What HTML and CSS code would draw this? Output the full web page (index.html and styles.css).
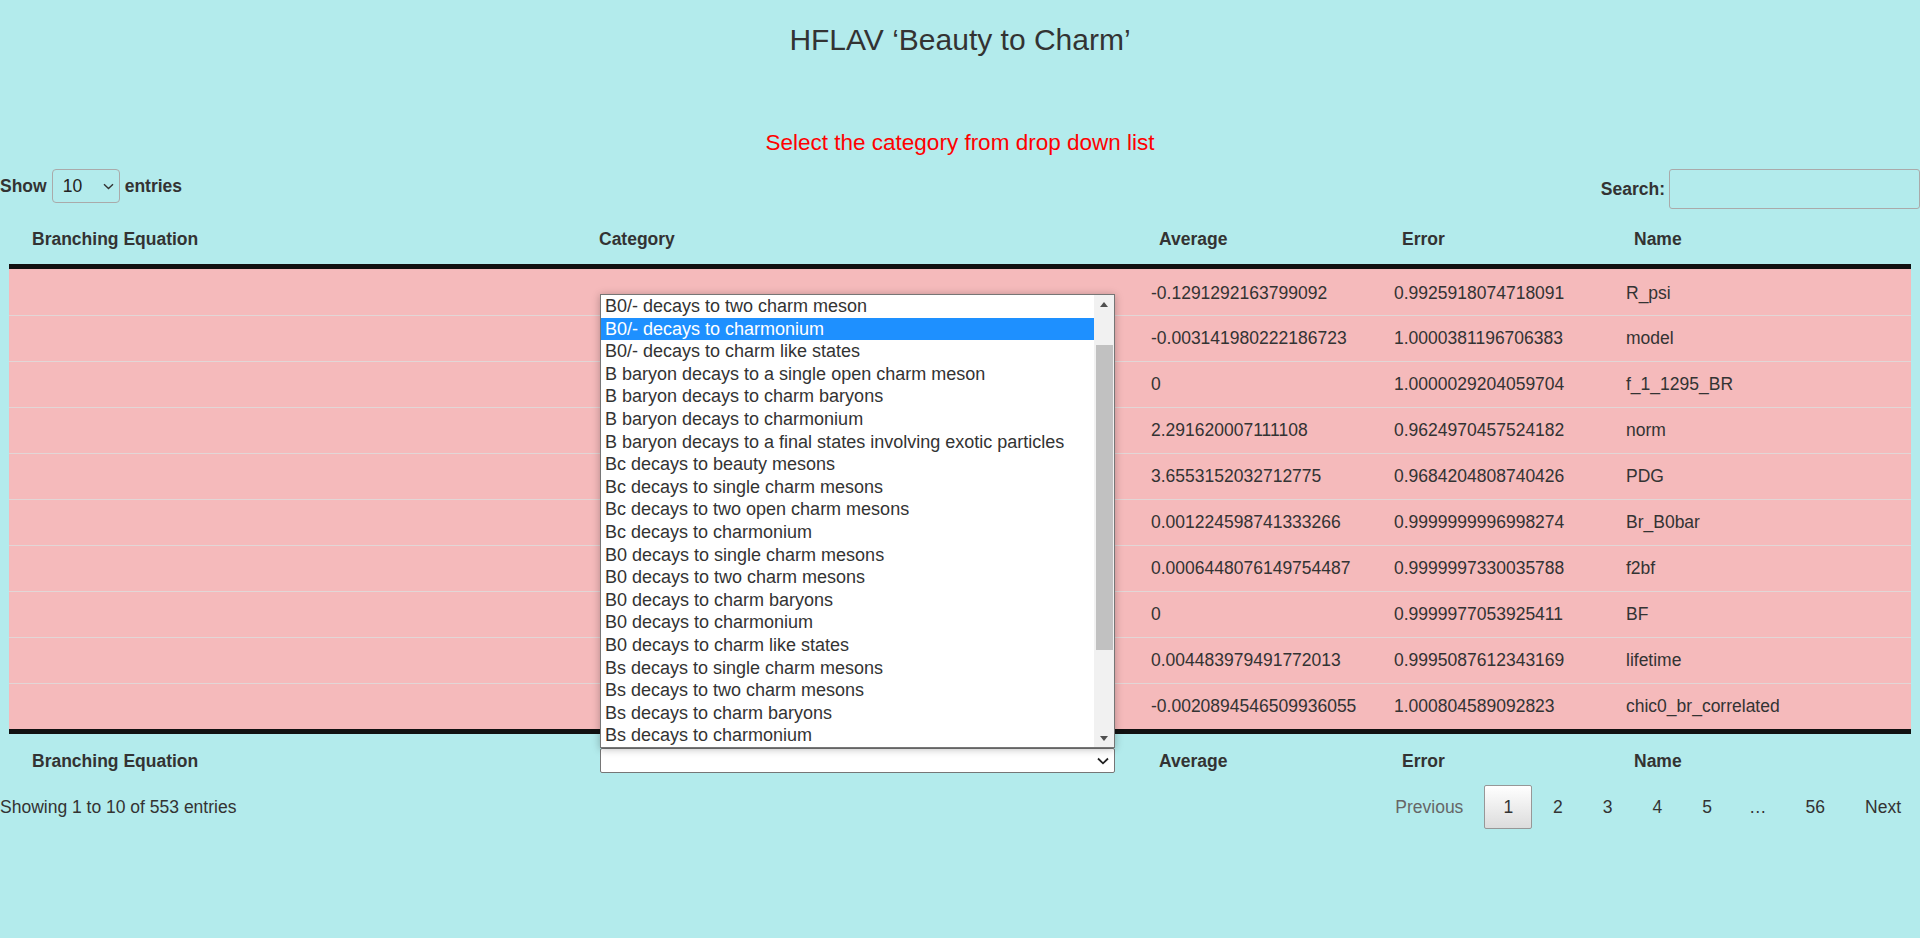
FILE: index.html
```html
<!DOCTYPE html>
<html lang="en">
<head>
<meta charset="utf-8">
<title>HFLAV Beauty to Charm</title>
<link rel="stylesheet" href="styles.css">
</head>
<body>
<h1 class="title">HFLAV ‘Beauty to Charm’</h1>
<p class="notice">Select the category from drop down list</p>

<div class="controls">
  <div class="length">
    <span>Show</span>
    <span class="select-box"><span>10</span>
      <svg class="chev-sm" width="11" height="7" viewBox="0 0 11 7"><path d="M1 1.2 L5.5 5.6 L10 1.2" fill="none" stroke="#333" stroke-width="1.4"/></svg>
    </span>
    <span>entries</span>
  </div>
  <div class="search">
    <span>Search:</span>
    <span class="search-input"></span>
  </div>
</div>

<table class="data">
  <colgroup>
    <col class="w1"><col class="w2"><col class="w3"><col class="w4"><col class="w5">
  </colgroup>
  <thead>
    <tr>
      <th class="first">Branching Equation</th>
      <th class="cat">Category</th>
      <th>Average</th>
      <th>Error</th>
      <th>Name</th>
    </tr>
  </thead>
  <tbody>
    <tr><td></td><td></td><td>-0.1291292163799092</td><td>0.9925918074718091</td><td>R_psi</td></tr>
    <tr><td></td><td></td><td>-0.003141980222186723</td><td>1.0000381196706383</td><td>model</td></tr>
    <tr><td></td><td></td><td>0</td><td>1.0000029204059704</td><td>f_1_1295_BR</td></tr>
    <tr><td></td><td></td><td>2.291620007111108</td><td>0.9624970457524182</td><td>norm</td></tr>
    <tr><td></td><td></td><td>3.6553152032712775</td><td>0.9684204808740426</td><td>PDG</td></tr>
    <tr><td></td><td></td><td>0.001224598741333266</td><td>0.9999999996998274</td><td>Br_B0bar</td></tr>
    <tr><td></td><td></td><td>0.0006448076149754487</td><td>0.9999997330035788</td><td>f2bf</td></tr>
    <tr><td></td><td></td><td>0</td><td>0.9999977053925411</td><td>BF</td></tr>
    <tr><td></td><td></td><td>0.004483979491772013</td><td>0.9995087612343169</td><td>lifetime</td></tr>
    <tr><td></td><td></td><td>-0.0020894546509936055</td><td>1.000804589092823</td><td>chic0_br_correlated</td></tr>
  </tbody>
  <tfoot>
    <tr>
      <th class="first">Branching Equation</th>
      <th class="cat-filter">
        <div class="filter">
          <div class="listbox">
            <ul class="options">
              <li>B0/- decays to two charm meson</li>
              <li class="selected">B0/- decays to charmonium</li>
              <li>B0/- decays to charm like states</li>
              <li>B baryon decays to a single open charm meson</li>
              <li>B baryon decays to charm baryons</li>
              <li>B baryon decays to charmonium</li>
              <li>B baryon decays to a final states involving exotic particles</li>
              <li>Bc decays to beauty mesons</li>
              <li>Bc decays to single charm mesons</li>
              <li>Bc decays to two open charm mesons</li>
              <li>Bc decays to charmonium</li>
              <li>B0 decays to single charm mesons</li>
              <li>B0 decays to two charm mesons</li>
              <li>B0 decays to charm baryons</li>
              <li>B0 decays to charmonium</li>
              <li>B0 decays to charm like states</li>
              <li>Bs decays to single charm mesons</li>
              <li>Bs decays to two charm mesons</li>
              <li>Bs decays to charm baryons</li>
              <li>Bs decays to charmonium</li>
            </ul>
            <div class="scrollbar">
              <div class="sb-btn"><span class="tri-up"></span></div>
              <div class="sb-track"><div class="sb-thumb"></div></div>
              <div class="sb-btn"><span class="tri-down"></span></div>
            </div>
          </div>
          <div class="fake-select">
            <svg width="12" height="8" viewBox="0 0 12 8"><path d="M1 1.5 L6 6.3 L11 1.5" fill="none" stroke="#222" stroke-width="1.8"/></svg>
          </div>
        </div>
      </th>
      <th>Average</th>
      <th>Error</th>
      <th>Name</th>
    </tr>
  </tfoot>
</table>

<div class="bottom">
  <div class="info">Showing 1 to 10 of 553 entries</div>
  <div class="paginate">
    <span class="page disabled">Previous</span>
    <span class="page current">1</span>
    <span class="page">2</span>
    <span class="page">3</span>
    <span class="page">4</span>
    <span class="page">5</span>
    <span class="ellipsis">…</span>
    <span class="page">56</span>
    <span class="page">Next</span>
  </div>
</div>
</body>
</html>
```
FILE: styles.css
```css
body {
  margin: 0;
  background: #b3ebec;
  font-family: "Liberation Sans", Arial, sans-serif;
  font-size: 17.5px;
  color: #333;
}

.title {
  margin: 0;
  padding-top: 23px;
  font-size: 30px;
  font-weight: normal;
  line-height: 34px;
  text-align: center;
  color: #333;
}

.notice {
  margin: 73px 0 0;
  font-size: 22.5px;
  line-height: 26px;
  color: #ff0000;
  text-align: center;
}

.controls {
  display: flex;
  justify-content: space-between;
  align-items: flex-start;
  margin-top: 13px;
  height: 40px;
}

.length {
  display: flex;
  align-items: center;
  gap: 5px;
  height: 34px;
  font-weight: bold;
}

.select-box {
  display: inline-flex;
  align-items: center;
  justify-content: space-between;
  box-sizing: border-box;
  width: 68px;
  height: 34px;
  padding: 0 5px 0 10px;
  border: 1px solid #aaa;
  border-radius: 4px;
  font-weight: normal;
  color: #222;
}

.search {
  display: flex;
  align-items: center;
  gap: 4px;
  height: 40px;
  font-weight: bold;
}

.search-input {
  display: block;
  box-sizing: border-box;
  width: 251px;
  height: 40px;
  border: 1px solid #aaa;
  border-radius: 3px;
}

.data {
  width: 1902px;
  margin: 10px 9px 0;
  border-collapse: separate;
  border-spacing: 0;
  table-layout: fixed;
}

.w1 { width: 572px; }
.w2 { width: 560px; }
.w3 { width: 243px; }
.w4 { width: 232px; }
.w5 { width: 295px; }

.data th {
  text-align: left;
  font-weight: bold;
  line-height: 20px;
  padding: 10px 18px 15px;
  border-bottom: 5px solid #111;
  white-space: nowrap;
}

.data th.first {
  padding-left: 23px;
}

.data th.cat {
  padding-left: 18px;
}

.data td {
  background: #f5babb;
  padding: 12px 10px;
  line-height: 21px;
  border-top: 1px solid #e2d6d6;
  white-space: nowrap;
}

.data tbody tr:first-child td {
  border-top-color: #f5babb;
  padding-top: 13px;
  padding-bottom: 11px;
}

.data tfoot th {
  padding: 14px 18px 8px;
  border-bottom: none;
  border-top: 5px solid #111;
  vertical-align: middle;
}

.data tfoot th.first {
  padding-left: 23px;
}

.data tfoot th.cat-filter {
  padding-left: 19px;
}

.filter {
  position: relative;
  width: 515px;
}

.fake-select {
  display: flex;
  align-items: center;
  justify-content: flex-end;
  box-sizing: border-box;
  height: 25px;
  padding-right: 5px;
  border: 1px solid #767676;
  border-radius: 2px;
  background: #fff;
}

.listbox {
  position: absolute;
  left: 0;
  bottom: 100%;
  width: 515px;
  height: 454px;
  box-sizing: border-box;
  display: flex;
  border: 1px solid #767676;
  background: #fff;
  box-shadow: 0 1px 8px rgba(0, 0, 0, 0.28);
  font-size: 18px;
  font-weight: normal;
  overflow: hidden;
  z-index: 5;
}

.options {
  flex: 1;
  margin: 0;
  padding: 0;
  list-style: none;
}

.options li {
  height: 22.6px;
  line-height: 22.6px;
  padding-left: 4px;
  white-space: nowrap;
  overflow: hidden;
  color: #333;
}

.options li.selected {
  background: #1e90ff;
  color: #fff;
}

.scrollbar {
  width: 20px;
  display: flex;
  flex-direction: column;
  background: #f1f1f1;
}

.sb-btn {
  height: 18px;
  display: flex;
  align-items: center;
  justify-content: center;
}

.tri-up {
  width: 0;
  height: 0;
  border-left: 4px solid transparent;
  border-right: 4px solid transparent;
  border-bottom: 5px solid #505050;
}

.tri-down {
  width: 0;
  height: 0;
  border-left: 4px solid transparent;
  border-right: 4px solid transparent;
  border-top: 5px solid #505050;
}

.sb-track {
  flex: 1;
  padding-top: 32px;
}

.sb-thumb {
  height: 305px;
  margin-left: 2px;
  width: 17px;
  background: #c1c1c1;
}

.bottom {
  display: flex;
  justify-content: space-between;
  align-items: center;
  margin-top: 4px;
}

.info {
  line-height: 20px;
}

.paginate {
  display: flex;
  align-items: center;
}

.page {
  display: inline-block;
  box-sizing: border-box;
  padding: 11px 18px;
  line-height: 20px;
  margin-left: 2px;
  border: 1px solid transparent;
  border-radius: 2px;
  color: #333;
}

.page.current {
  border-color: #979797;
  background: linear-gradient(#ffffff, #dcdcdc);
}

.page.disabled {
  color: #666;
}

.ellipsis {
  padding: 0 18px;
  color: #333;
}
```
